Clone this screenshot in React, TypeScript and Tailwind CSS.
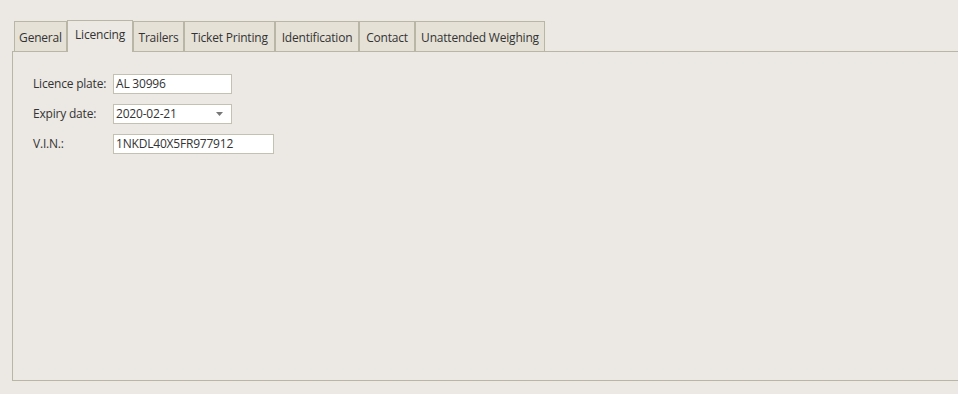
import React from "react";

const tabs = [
  { label: "General", w: "w-[53px]" },
  { label: "Licencing", w: "w-[66px]" },
  { label: "Trailers", w: "w-[51px]" },
  { label: "Ticket Printing", w: "w-[91px]" },
  { label: "Identification", w: "w-[84px]" },
  { label: "Contact", w: "w-[56px]" },
  { label: "Unattended Weighing", w: "w-[130px]" },
];

const App = () => {
  return (
    <div
      className="w-[958px] h-[394px] bg-[#ECE9E4] text-[#333] text-[12px] overflow-hidden pt-[20px] pl-[12px]"
      style={{ fontFamily: '"Open Sans", "Noto Sans", sans-serif' }}
    >
      {/* Tabs */}
      <div className="flex items-end h-[31px] pl-[2px] relative z-10">
        {tabs.map((t, i) =>
          i === 1 ? (
            <div
              key={t.label}
              className={`${t.w} h-[32px] -mb-px bg-[#ECE9E4] border border-b-0 border-[#BAB6A6] flex items-center justify-center tracking-[-0.2px] pb-[3px] shrink-0`}
            >
              {t.label}
            </div>
          ) : (
            <div
              key={t.label}
              className={`${t.w} h-[30px] bg-[#E5E1D7] border border-b-0 border-[#BAB6A6] flex items-center justify-center tracking-[-0.2px] pt-[2px] shrink-0`}
            >
              {t.label}
            </div>
          )
        )}
      </div>

      {/* Panel */}
      <div className="h-[330px] border-l border-t border-b border-[#BAB6A6] pl-[20px] pt-[22px]">
        <div className="flex flex-col gap-[10px] tracking-[-0.2px]">
          <div className="flex items-center">
            <span className="w-[80px]">Licence plate:</span>
            <div className="w-[119px] h-[20px] bg-white border border-[#C4C0B2] px-[2px] flex items-center">
              AL 30996
            </div>
          </div>
          <div className="flex items-center">
            <span className="w-[80px]">Expiry date:</span>
            <div className="w-[119px] h-[20px] bg-white border border-[#C4C0B2] pl-[2px] pr-[8px] flex items-center justify-between">
              <span>2020-02-21</span>
              <svg width="7" height="4" viewBox="0 0 7 4">
                <path d="M0 0 L7 0 L3.5 4 Z" fill="#777" />
              </svg>
            </div>
          </div>
          <div className="flex items-center">
            <span className="w-[80px]">V.I.N.:</span>
            <div className="w-[161px] h-[20px] bg-white border border-[#C4C0B2] px-[2px] flex items-center">
              1NKDL40X5FR977912
            </div>
          </div>
        </div>
      </div>
    </div>
  );
};

export default App;
